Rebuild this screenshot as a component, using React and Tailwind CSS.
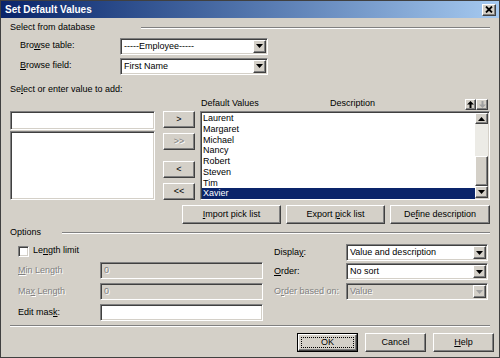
import React from "react";

// Win2000-style bevels
const raised =
  "bg-[#d4d0c8] border border-t-white border-l-white border-b-[#404040] border-r-[#404040] shadow-[inset_-1px_-1px_0_#808080,inset_1px_1px_0_#d4d0c8]";
const sunken =
  "border border-t-[#808080] border-l-[#808080] border-b-white border-r-white shadow-[inset_1px_1px_0_#404040,inset_-1px_-1px_0_#d4d0c8]";
const grayText = "text-[#808080] [text-shadow:1px_1px_0_#ffffff]";

const U = ({ children }) => <span className="underline underline-offset-1">{children}</span>;

const Caret = ({ up, color = "#000" }) => (
  <svg width="7" height="4" viewBox="0 0 7 4">
    <path d={up ? "M3.5 0L7 4H0z" : "M0 0h7L3.5 4z"} fill={color} />
  </svg>
);

const Select = ({ value, className = "", disabled }) => (
  <div className={`${sunken} flex h-[17px] p-[1px] ${disabled ? "bg-[#d4d0c8]" : "bg-white"} ${className}`}>
    <div className={`flex-1 flex items-center pl-[2px] leading-none ${disabled ? grayText : ""}`}>{value}</div>
    <div className={`${raised} w-[13px] flex items-center justify-center`}>
      <Caret color={disabled ? "#a0a0a0" : "#000"} />
    </div>
  </div>
);

const Button = ({ children, className = "", disabled }) => (
  <div className={`${raised} flex items-center justify-center leading-none ${disabled ? grayText : ""} ${className}`}>
    <span>{children}</span>
  </div>
);

const Etched = ({ className = "" }) => (
  <div className={`h-[2px] border-t border-t-[#808080] border-b border-b-white ${className}`} />
);

const names = ["Laurent", "Margaret", "Michael", "Nancy", "Robert", "Steven", "Tim", "Xavier"];

export default function App() {
  return (
    <div className="w-[500px] h-[358px] bg-[#d4d0c8] border border-[#404040] flex flex-col text-[9px] text-black font-['Liberation_Sans',Arial,sans-serif] overflow-hidden">
      {/* Title bar */}
      <div className="h-[17px] flex items-center bg-linear-to-r from-[#0a246a] to-[#a6caf0] pl-[4px] pr-[3px]">
        <span className="text-white font-bold text-[10px] flex-1">Set Default Values</span>
        <div className={`${raised} w-[14px] h-[12px] flex items-center justify-center`}>
          <svg width="8" height="7" viewBox="0 0 8 7">
            <path d="M1 0.5L7 6.5M7 0.5L1 6.5" stroke="#000" strokeWidth="1.8" />
          </svg>
        </div>
      </div>

      <div className="flex flex-col px-[9px]">
        {/* Select from database */}
        <div className="flex items-center h-[14px] mt-[3px]">
          <span>Select from database</span>
          <Etched className="flex-1 ml-[46px]" />
        </div>
        <div className="flex items-center h-[18px] mt-[2px] pl-[10px]">
          <span className="w-[100px]">
            Bro<U>w</U>se table:
          </span>
          <Select value="-----Employee-----" className="w-[148px]" />
        </div>
        <div className="flex items-center h-[18px] mt-[2px] pl-[10px]">
          <span className="w-[100px]">
            <U>B</U>rowse field:
          </span>
          <Select value="First Name" className="w-[148px]" />
        </div>

        <div className="flex items-center h-[14px] mt-[8px]">
          <span>
            Se<U>l</U>ect or enter value to add:
          </span>
        </div>

        {/* Value lists */}
        <div className="flex">
          <div className="w-[145px] flex flex-col pt-[14px]">
            <div className={`${sunken} bg-white h-[19px]`} />
            <div className={`${sunken} bg-white h-[69px] mt-[1px]`} />
          </div>
          <div className="w-[32px] ml-[8px] flex flex-col pt-[14px]">
            <Button className="h-[17px]">&gt;</Button>
            <Button className="h-[17px] mt-[5px]" disabled>
              &gt;&gt;
            </Button>
            <Button className="h-[17px] mt-[11px]">&lt;</Button>
            <Button className="h-[17px] mt-[5px]">&lt;&lt;</Button>
          </div>
          <div className="flex-1 ml-[5px] flex flex-col">
            <div className="h-[14px] flex items-center pr-[2px]">
              <span className="w-[130px] pl-[1px]">Default Values</span>
              <span className="flex-1">Description</span>
              <div className={`${raised} w-[11px] h-[11px] flex items-center justify-center`}>
                <svg width="7" height="7" viewBox="0 0 7 7">
                  <path d="M3.5 0L7 3.5H4.5V7h-2V3.5H0z" fill="#000" />
                </svg>
              </div>
              <div className={`${raised} w-[12px] h-[11px] flex items-center justify-center`}>
                <svg width="7" height="7" viewBox="0 0 7 7">
                  <path d="M3.5 7L7 3.5H4.5V0h-2v3.5H0z" fill="#a0a0a0" />
                </svg>
              </div>
            </div>
            <div className={`${sunken} bg-white h-[89px] p-[1px] flex`}>
              <div className="flex-1 flex flex-col">
                {names.map((n) => (
                  <div
                    key={n}
                    className={`h-[10.75px] leading-[10.75px] pl-[1px] ${
                      n === "Xavier" ? "bg-[#0a246a] text-white" : ""
                    }`}
                  >
                    {n}
                  </div>
                ))}
              </div>
              <div className="w-[13px] flex flex-col bg-[#ecebe6]">
                <div className={`${raised} h-[11px] flex items-center justify-center`}>
                  <Caret up />
                </div>
                <div className="h-[32px]" />
                <div className={`${raised} flex-1`} />
                <div className={`${raised} h-[12px] flex items-center justify-center`}>
                  <Caret />
                </div>
              </div>
            </div>
          </div>
        </div>

        {/* Pick list buttons */}
        <div className="flex justify-end gap-[5px] mt-[5px]">
          <Button className="w-[99px] h-[19px]">
            <U>I</U>mport pick list
          </Button>
          <Button className="w-[99px] h-[19px]">
            Export <U>p</U>ick list
          </Button>
          <Button className="w-[100px] h-[19px]">
            De<U>f</U>ine description
          </Button>
        </div>

        {/* Options */}
        <div className="flex items-center h-[14px] mt-[2px]">
          <span>Options</span>
          <Etched className="flex-1 ml-[21px]" />
        </div>
        <div className="flex">
          <div className="w-[245px] ml-[8px] flex flex-col">
            <div className="h-[22px] flex items-center">
              <div className={`${sunken} bg-white w-[11px] h-[11px]`} />
              <span className="ml-[4px]">
                Le<U>n</U>gth limit
              </span>
            </div>
            <div className="h-[17px] flex items-center">
              <span className={`w-[82px] ${grayText}`}>
                <U>M</U>in Length
              </span>
              <div className={`${sunken} flex-1 h-full flex items-center pl-[3px] ${grayText}`}>0</div>
            </div>
            <div className="h-[17px] mt-[4px] flex items-center">
              <span className={`w-[82px] ${grayText}`}>
                Ma<U>x</U> Length
              </span>
              <div className={`${sunken} flex-1 h-full flex items-center pl-[3px] ${grayText}`}>0</div>
            </div>
            <div className="h-[17px] mt-[4px] flex items-center">
              <span className="w-[82px]">
                Edit mas<U>k</U>:
              </span>
              <div className={`${sunken} bg-white flex-1 h-full`} />
            </div>
          </div>
          <div className="flex-1 ml-[11px] mr-[2px] flex flex-col pt-[4px]">
            <div className="h-[17px] flex items-center">
              <span className="w-[72px]">
                Displa<U>y</U>:
              </span>
              <Select value="Value and description" className="flex-1" />
            </div>
            <div className="h-[17px] mt-[2px] flex items-center">
              <span className="w-[72px]">
                <U>O</U>rder:
              </span>
              <Select value="No sort" className="flex-1" />
            </div>
            <div className="h-[17px] mt-[3px] flex items-center">
              <span className={`w-[72px] ${grayText}`}>
                O<U>r</U>der based on:
              </span>
              <Select value="Value" className="flex-1" disabled />
            </div>
          </div>
        </div>

        <Etched className="mt-[4px]" />

        {/* Dialog buttons */}
        <div className="flex justify-end gap-[7px] mt-[6px] -mr-[4px]">
          <div className="w-[61px] h-[19px] border border-black">
            <div className={`${raised} h-full flex p-[2px]`}>
              <div className="flex-1 border border-dotted border-black flex items-center justify-center leading-none">
                OK
              </div>
            </div>
          </div>
          <Button className="w-[61px] h-[19px]">Cancel</Button>
          <Button className="w-[61px] h-[19px]">
            <U>H</U>elp
          </Button>
        </div>
      </div>
    </div>
  );
}
